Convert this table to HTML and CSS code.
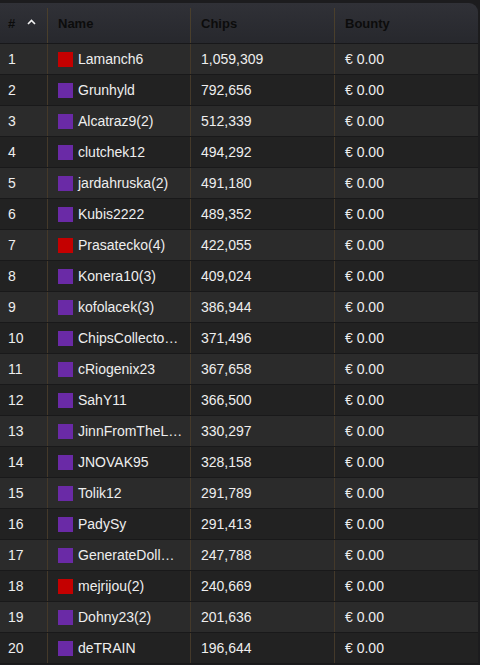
FILE: index.html
```html
<!DOCTYPE html>
<html>
<head>
<meta charset="utf-8">
<link rel="stylesheet" href="styles.css">
</head>
<body>
<div class="board">
  <div class="head">
    <div class="hcell hnum"><span>#</span>
      <svg class="caret" width="9" height="6" viewBox="0 0 9 6"><path d="M1 5 L4.5 1.5 L8 5" fill="none" stroke="#f2f2f2" stroke-width="1.6"/></svg>
    </div>
    <div class="hcell">Name</div>
    <div class="hcell">Chips</div>
    <div class="hcell">Bounty</div>
  </div>
  <div class="rows">
    <div class="row"><div class="c num">1</div><div class="c name"><i class="sq red"></i><span>Lamanch6</span></div><div class="c">1,059,309</div><div class="c">€ 0.00</div></div>
    <div class="row"><div class="c num">2</div><div class="c name"><i class="sq purple"></i><span>Grunhyld</span></div><div class="c">792,656</div><div class="c">€ 0.00</div></div>
    <div class="row"><div class="c num">3</div><div class="c name"><i class="sq purple"></i><span>Alcatraz9(2)</span></div><div class="c">512,339</div><div class="c">€ 0.00</div></div>
    <div class="row"><div class="c num">4</div><div class="c name"><i class="sq purple"></i><span>clutchek12</span></div><div class="c">494,292</div><div class="c">€ 0.00</div></div>
    <div class="row"><div class="c num">5</div><div class="c name"><i class="sq purple"></i><span>jardahruska(2)</span></div><div class="c">491,180</div><div class="c">€ 0.00</div></div>
    <div class="row"><div class="c num">6</div><div class="c name"><i class="sq purple"></i><span>Kubis2222</span></div><div class="c">489,352</div><div class="c">€ 0.00</div></div>
    <div class="row"><div class="c num">7</div><div class="c name"><i class="sq red"></i><span>Prasatecko(4)</span></div><div class="c">422,055</div><div class="c">€ 0.00</div></div>
    <div class="row"><div class="c num">8</div><div class="c name"><i class="sq purple"></i><span>Konera10(3)</span></div><div class="c">409,024</div><div class="c">€ 0.00</div></div>
    <div class="row"><div class="c num">9</div><div class="c name"><i class="sq purple"></i><span>kofolacek(3)</span></div><div class="c">386,944</div><div class="c">€ 0.00</div></div>
    <div class="row"><div class="c num">10</div><div class="c name"><i class="sq purple"></i><span>ChipsCollecto…</span></div><div class="c">371,496</div><div class="c">€ 0.00</div></div>
    <div class="row"><div class="c num">11</div><div class="c name"><i class="sq purple"></i><span>cRiogenix23</span></div><div class="c">367,658</div><div class="c">€ 0.00</div></div>
    <div class="row"><div class="c num">12</div><div class="c name"><i class="sq purple"></i><span>SahY11</span></div><div class="c">366,500</div><div class="c">€ 0.00</div></div>
    <div class="row"><div class="c num">13</div><div class="c name"><i class="sq purple"></i><span>JinnFromTheL…</span></div><div class="c">330,297</div><div class="c">€ 0.00</div></div>
    <div class="row"><div class="c num">14</div><div class="c name"><i class="sq purple"></i><span>JNOVAK95</span></div><div class="c">328,158</div><div class="c">€ 0.00</div></div>
    <div class="row"><div class="c num">15</div><div class="c name"><i class="sq purple"></i><span>Tolik12</span></div><div class="c">291,789</div><div class="c">€ 0.00</div></div>
    <div class="row"><div class="c num">16</div><div class="c name"><i class="sq purple"></i><span>PadySy</span></div><div class="c">291,413</div><div class="c">€ 0.00</div></div>
    <div class="row"><div class="c num">17</div><div class="c name"><i class="sq purple"></i><span>GenerateDoll…</span></div><div class="c">247,788</div><div class="c">€ 0.00</div></div>
    <div class="row"><div class="c num">18</div><div class="c name"><i class="sq red"></i><span>mejrijou(2)</span></div><div class="c">240,669</div><div class="c">€ 0.00</div></div>
    <div class="row"><div class="c num">19</div><div class="c name"><i class="sq purple"></i><span>Dohny23(2)</span></div><div class="c">201,636</div><div class="c">€ 0.00</div></div>
    <div class="row"><div class="c num">20</div><div class="c name"><i class="sq purple"></i><span>deTRAIN</span></div><div class="c">196,644</div><div class="c">€ 0.00</div></div>
  </div>
</div>
</body>
</html>
```
FILE: styles.css
```css
html, body {
  margin: 0;
  padding: 0;
  background: #1c1c1e;
}
body {
  font-family: "Liberation Sans", Arial, sans-serif;
  width: 480px;
  height: 665px;
  overflow: hidden;
}
.board {
  padding-top: 3px;
  width: 478px;
}
.head {
  display: grid;
  grid-template-columns: 47px 143px 144px 1fr;
  height: 40px;
  background: linear-gradient(#303137, #27282d);
  border-top-right-radius: 9px;
  border-bottom: 1px solid #18181a;
  align-items: end;
}
.hcell {
  height: 35px;
  display: flex;
  align-items: center;
  padding: 0 0 5px 10px;
  box-sizing: border-box;
  border-left: 1px solid #4a3f2c;
  font-size: 13px;
  font-weight: bold;
  color: #0c0c0c;
}
.hcell.hnum {
  border-left: none;
  padding-left: 8px;
}
.caret {
  margin-left: 12px;
  margin-top: -2px;
}
.row {
  display: grid;
  grid-template-columns: 47px 143px 144px 1fr;
  height: 30px;
  border-bottom: 1px solid #19191a;
  background: #2b2b2b;
}
.row:nth-child(even) {
  background: #222222;
}
.c {
  display: flex;
  align-items: center;
  padding-left: 10px;
  border-left: 1px solid #44392a;
  font-size: 14px;
  color: #eeeeee;
  white-space: nowrap;
  min-width: 0;
}
.c.num {
  border-left: none;
  padding-left: 8px;
}
.c.name {
  padding-right: 6px;
}
.sq {
  flex: none;
  width: 15px;
  height: 15px;
  margin-right: 5px;
}
.sq.red { background: #c40000; }
.sq.purple { background: #6a2aa6; }
```
